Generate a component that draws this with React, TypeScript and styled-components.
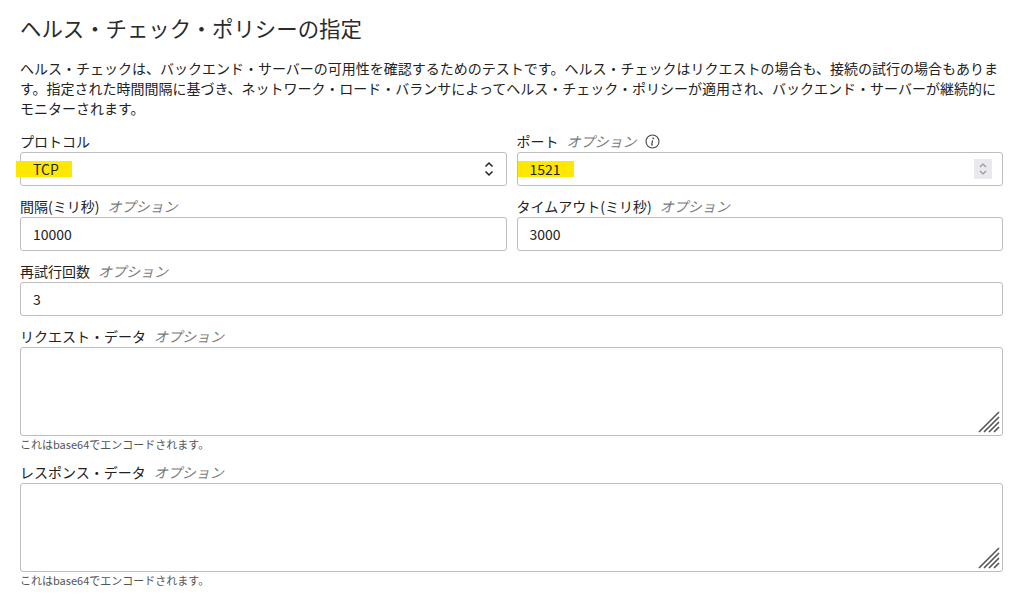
import React from "react";
import styled, { createGlobalStyle } from "styled-components";

const Global = createGlobalStyle`
  html, body { margin: 0; padding: 0; background: #fff; }
  body { font-family: "Noto Sans CJK JP", "Noto Sans", sans-serif; color: #222; }
`;

const Page = styled.div`
  width: 983px;
  padding: 13px 0 0 20px;
`;

const Title = styled.h2`
  margin: 0;
  font-size: 21.4px;
  line-height: 30px;
  font-weight: 400;
  color: #2b2b2b;
`;

const Desc = styled.p`
  margin: 15px 0 13px;
  font-size: 14px;
  line-height: 20px;
  color: #222;
  letter-spacing: 0;
`;

const Form = styled.div`
  display: flex;
  flex-direction: column;
  gap: 10px;
`;

const Row = styled.div`
  display: grid;
  grid-template-columns: 1fr 1fr;
  gap: 10px;
`;

const Field = styled.div`
  display: flex;
  flex-direction: column;
  position: relative;
`;

const Label = styled.label`
  display: flex;
  align-items: center;
  gap: 8px;
  height: 20px;
  margin-bottom: 1px;
  font-size: 14px;
  color: #222;
`;

const Optional = styled.span`
  font-style: italic;
  color: #7a7a7a;
`;

const Box = styled.div`
  position: relative;
  height: 34px;
  box-sizing: border-box;
  border: 1px solid #bdbdbd;
  border-radius: 3px;
  display: flex;
  align-items: center;
  padding: 0 12px;
  font-size: 14px;
  color: #222;
`;

const Value = styled.span`
  position: relative;
  z-index: 1;
`;

const Highlight = styled.span<{ $left: number; $width: number }>`
  position: absolute;
  left: ${(p) => p.$left}px;
  width: ${(p) => p.$width}px;
  top: 8px;
  height: 16px;
  background: #ffe800;
  z-index: 0;
`;

const Chevrons = styled.span`
  margin-left: auto;
  display: flex;
`;

const Spinner = styled.span`
  margin-left: auto;
  margin-right: -2px;
  width: 18px;
  height: 20px;
  background: #e9e9ee;
  display: flex;
  align-items: center;
  justify-content: center;
`;

const TextArea = styled.div`
  position: relative;
  height: 89px;
  box-sizing: border-box;
  border: 1px solid #bdbdbd;
  border-radius: 3px;
`;

const Grip = styled.svg`
  position: absolute;
  right: 1px;
  bottom: 1px;
`;

const Help = styled.div`
  font-size: 11px;
  line-height: 16px;
  color: #555;
`;

const InfoIcon = () => (
  <svg width="15" height="15" viewBox="0 0 15 15">
    <circle cx="7.5" cy="7.5" r="6.5" fill="none" stroke="#444" strokeWidth="1.1" />
    <circle cx="8.2" cy="4.3" r="0.9" fill="#444" />
    <path d="M7.6 6.4 L6.6 10.8 M6.2 10.9 H7.8" stroke="#444" strokeWidth="1.2" fill="none" />
  </svg>
);

const SelectChevrons = () => (
  <Chevrons>
    <svg width="10" height="18" viewBox="0 0 10 18">
      <path d="M1.5 6.5 L5 3 L8.5 6.5" stroke="#222" strokeWidth="1.5" fill="none" />
      <path d="M1.5 11.5 L5 15 L8.5 11.5" stroke="#222" strokeWidth="1.5" fill="none" />
    </svg>
  </Chevrons>
);

const NumberSpinner = () => (
  <Spinner>
    <svg width="10" height="16" viewBox="0 0 10 16">
      <path d="M2 6 L5 3 L8 6" stroke="#999" strokeWidth="1.2" fill="none" />
      <path d="M2 10 L5 13 L8 10" stroke="#999" strokeWidth="1.2" fill="none" />
    </svg>
  </Spinner>
);

const ResizeGrip = () => (
  <Grip width="24" height="24" viewBox="0 0 24 24">
    <path
      d="M2 22 L22 2 M7 22 L22 7 M12 22 L22 12 M17 22 L22 17"
      stroke="#555"
      strokeWidth="1.6"
    />
  </Grip>
);

export default function App() {
  return (
    <>
      <Global />
      <Page>
        <Title>ヘルス・チェック・ポリシーの指定</Title>
        <Desc>
          ヘルス・チェックは、バックエンド・サーバーの可用性を確認するためのテストです。ヘルス・チェックはリクエストの場合も、接続の試行の場合もあります。指定された時間間隔に基づき、ネットワーク・ロード・バランサによってヘルス・チェック・ポリシーが適用され、バックエンド・サーバーが継続的にモニターされます。
        </Desc>
        <Form>
          <Row>
            <Field>
              <Label>プロトコル</Label>
              <Box>
                <Highlight $left={-5} $width={56} />
                <Value>TCP</Value>
                <SelectChevrons />
              </Box>
            </Field>
            <Field>
              <Label>
                <span>ポート</span>
                <Optional>オプション</Optional>
                <InfoIcon />
              </Label>
              <Box>
                <Highlight $left={0} $width={56} />
                <Value>1521</Value>
                <NumberSpinner />
              </Box>
            </Field>
          </Row>
          <Row>
            <Field>
              <Label>
                <span>間隔(ミリ秒)</span>
                <Optional>オプション</Optional>
              </Label>
              <Box>
                <Value>10000</Value>
              </Box>
            </Field>
            <Field>
              <Label>
                <span>タイムアウト(ミリ秒)</span>
                <Optional>オプション</Optional>
              </Label>
              <Box>
                <Value>3000</Value>
              </Box>
            </Field>
          </Row>
          <Field>
            <Label>
              <span>再試行回数</span>
              <Optional>オプション</Optional>
            </Label>
            <Box>
              <Value>3</Value>
            </Box>
          </Field>
          <Field>
            <Label>
              <span>リクエスト・データ</span>
              <Optional>オプション</Optional>
            </Label>
            <TextArea>
              <ResizeGrip />
            </TextArea>
            <Help>これはbase64でエンコードされます。</Help>
          </Field>
          <Field>
            <Label>
              <span>レスポンス・データ</span>
              <Optional>オプション</Optional>
            </Label>
            <TextArea>
              <ResizeGrip />
            </TextArea>
            <Help>これはbase64でエンコードされます。</Help>
          </Field>
        </Form>
      </Page>
    </>
  );
}
